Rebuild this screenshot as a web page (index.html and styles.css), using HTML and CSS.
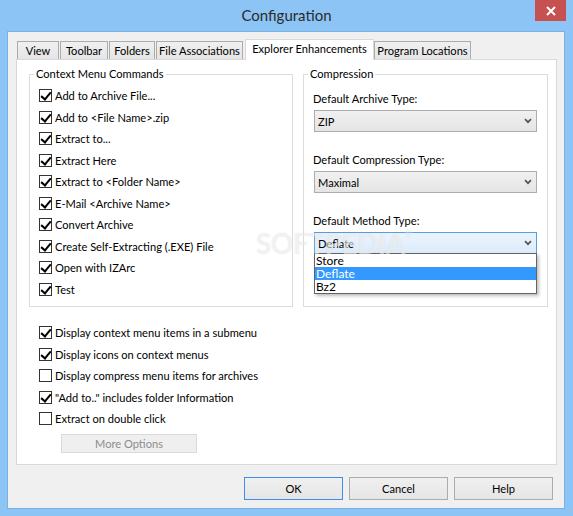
FILE: index.html
```html
<!DOCTYPE html>
<html>
<head>
<meta charset="utf-8">
<link rel="stylesheet" href="styles.css">
</head>
<body>
<div class="window">
  <div class="titlebar">
    <span class="title">Configuration</span>
    <div class="close"><svg width="10" height="10" viewBox="0 0 10 10"><path d="M1 1 L9 9 M9 1 L1 9" stroke="#fff" stroke-width="2"/></svg></div>
  </div>
  <div class="client">
    <div class="tabs">
      <span class="tab t-view">View</span>
      <span class="tab t-toolbar">Toolbar</span>
      <span class="tab t-folders">Folders</span>
      <span class="tab t-assoc">File Associations</span>
      <span class="tab tab-sel t-explorer">Explorer Enhancements</span>
      <span class="tab t-prog">Program Locations</span>
    </div>
    <div class="pane">
      <div class="groups">
        <div class="group g-cmds">
          <span class="glabel">Context Menu Commands</span>
          <div class="checklist">
            <div class="row"><span class="cb on"></span>Add to Archive File...</div>
            <div class="row"><span class="cb on"></span>Add to &lt;File Name&gt;.zip</div>
            <div class="row"><span class="cb on"></span>Extract to...</div>
            <div class="row"><span class="cb on"></span>Extract Here</div>
            <div class="row"><span class="cb on"></span>Extract to &lt;Folder Name&gt;</div>
            <div class="row"><span class="cb on"></span>E-Mail &lt;Archive Name&gt;</div>
            <div class="row"><span class="cb on"></span>Convert Archive</div>
            <div class="row"><span class="cb on"></span>Create Self-Extracting (.EXE) File</div>
            <div class="row"><span class="cb on"></span>Open with IZArc</div>
            <div class="row"><span class="cb on"></span>Test</div>
          </div>
        </div>
        <div class="group g-comp">
          <span class="glabel">Compression</span>
          <div class="field">
            <div class="flabel">Default Archive Type:</div>
            <div class="select"><span>ZIP</span><svg class="chev" width="8" height="6" viewBox="0 0 8 6"><path d="M1 1.2 L4 4.2 L7 1.2" fill="none" stroke="#555" stroke-width="1.7"/></svg></div>
          </div>
          <div class="field">
            <div class="flabel">Default Compression Type:</div>
            <div class="select"><span>Maximal</span><svg class="chev" width="8" height="6" viewBox="0 0 8 6"><path d="M1 1.2 L4 4.2 L7 1.2" fill="none" stroke="#555" stroke-width="1.7"/></svg></div>
          </div>
          <div class="field">
            <div class="flabel">Default Method Type:</div>
            <div class="select-wrap">
              <div class="select active"><span>Deflate</span><svg class="chev" width="8" height="6" viewBox="0 0 8 6"><path d="M1 1.2 L4 4.2 L7 1.2" fill="none" stroke="#555" stroke-width="1.7"/></svg></div>
              <div class="droplist">
                <div class="opt">Store</div>
                <div class="opt opt-sel">Deflate</div>
                <div class="opt">Bz2</div>
              </div>
            </div>
          </div>
        </div>
      </div>
      <div class="options">
        <div class="row"><span class="cb on"></span>Display context menu items in a submenu</div>
        <div class="row"><span class="cb on"></span>Display icons on context menus</div>
        <div class="row"><span class="cb"></span>Display compress menu items for archives</div>
        <div class="row"><span class="cb on"></span>"Add to.." includes folder Information</div>
        <div class="row"><span class="cb"></span>Extract on double click</div>
        <div class="more">More Options</div>
      </div>
    </div>
    <div class="buttons">
      <div class="btn btn-default">OK</div>
      <div class="btn">Cancel</div>
      <div class="btn">Help</div>
    </div>
  </div>
  <div class="watermark">SOFTPEDIA<sup>®</sup></div>
</div>
</body>
</html>
```
FILE: styles.css
```css
* { box-sizing: border-box; }
html, body { margin: 0; padding: 0; }
body {
  width: 573px;
  height: 516px;
  overflow: hidden;
  font-family: Lato, "Noto Sans", sans-serif;
  font-size: 11.1px;
  color: #000;
}
.window {
  width: 573px;
  height: 516px;
  background: #8cc5f5;
  display: flex;
  flex-direction: column;
  position: relative;
}
.titlebar {
  height: 31px;
  display: grid;
  grid-template-columns: 1fr auto 1fr;
}
.title {
  grid-column: 2;
  font-size: 15px;
  line-height: 31px;
  color: #2b2b2b;
}
.close {
  grid-column: 3;
  justify-self: end;
  align-self: start;
  width: 31px;
  height: 21px;
  margin-right: 7px;
  background: #c75050;
  display: flex;
  align-items: center;
  justify-content: center;
}
.client {
  flex: 1;
  margin: 0 8px 7px 7px;
  background: #f0f0f0;
  border: 1px solid #7ab1e3;
  padding: 7px 7px 0 8px;
  display: flex;
  flex-direction: column;
}
.tabs {
  display: flex;
  align-items: flex-end;
  height: 20px;
  padding-left: 1px;
  position: relative;
  z-index: 1;
}
.tab {
  height: 18px;
  border: 1px solid #acacac;
  border-bottom: none;
  background: linear-gradient(#f0f0f0, #e5e5e5);
  display: flex;
  align-items: center;
  justify-content: center;
  white-space: nowrap;
  line-height: 16px;
  padding-top: 1px;
  margin-right: 1px;
}
.tab-sel {
  height: 21px;
  margin-bottom: -1px;
  margin-left: 1px;
  margin-right: 0;
  background: #fff;
  border-color: #d9d9d9;
  padding-top: 0;
  padding-bottom: 3px;
}
.t-view { width: 42px; }
.t-toolbar { width: 48px; }
.t-folders { width: 46px; }
.t-assoc { width: 87px; }
.t-explorer { width: 129px; }
.t-prog { width: 97px; }

.pane {
  height: 406px;
  background: #fff;
  border: 1px solid #d9d9d9;
  padding: 14px 8px 0 12px;
}
.groups {
  display: flex;
  gap: 10px;
}
.group {
  position: relative;
  border: 1px solid #dcdcdc;
  height: 233px;
}
.g-cmds { width: 264px; padding: 10px 0 0 9px; }
.g-comp { width: 245px; padding: 16px 10px 0 10px; }
.glabel {
  position: absolute;
  top: -9px;
  left: 4px;
  background: #fff;
  padding: 0 2px;
  line-height: 16px;
}
.row {
  height: 21.5px;
  display: flex;
  align-items: center;
  white-space: nowrap;
}
.cb {
  width: 13px;
  height: 13px;
  border: 1px solid #333;
  background: #fff;
  margin-right: 3px;
  flex: none;
  position: relative;
}
.cb.on::after {
  content: "";
  position: absolute;
  left: 3px;
  top: 0px;
  width: 4px;
  height: 8px;
  border-right: 2px solid #000;
  border-bottom: 2px solid #000;
  transform: rotate(40deg);
}
.field { margin-bottom: 20px; }
.flabel {
  line-height: 16px;
  margin-bottom: 3px;
  margin-left: -1px;
}
.select {
  height: 22px;
  border: 1px solid #acacac;
  background: linear-gradient(#f0f0f0, #e5e5e5);
  display: flex;
  align-items: center;
  justify-content: space-between;
  padding: 0 4px 0 3px;
}
.select.active {
  border-color: #569de5;
  background: linear-gradient(#ebf4fc, #dcecfc);
}
.chev { flex: none; }
.select-wrap { position: relative; }
.droplist {
  position: absolute;
  top: 21px;
  left: 0;
  width: 223px;
  background: #fff;
  border: 1px solid #646464;
  box-shadow: 2px 2px 3px rgba(0, 0, 0, 0.25);
  z-index: 2;
}
.opt {
  height: 13px;
  line-height: 13px;
  padding-left: 1px;
  font-size: 12px;
}
.opt-sel {
  background: #3399ff;
  color: #fff;
}
.options {
  padding: 15px 0 0 10px;
}
.more {
  width: 136px;
  height: 19px;
  margin: 4px 0 0 22px;
  border: 1px solid #d9d9d9;
  background: #efefef;
  color: #8d8d8d;
  display: flex;
  align-items: center;
  justify-content: center;
}
.buttons {
  display: flex;
  justify-content: flex-end;
  gap: 6px;
  margin-top: 12px;
  padding-right: 4px;
}
.btn {
  width: 99px;
  height: 23px;
  border: 1px solid #acacac;
  background: linear-gradient(#f0f0f0, #e5e5e5);
  display: flex;
  align-items: center;
  justify-content: center;
}
.btn-default { border-color: #3c8ee6; }
.watermark {
  position: absolute;
  left: 256px;
  top: 226px;
  font-size: 28px;
  font-weight: bold;
  letter-spacing: -0.5px;
  color: rgba(255, 255, 255, 0.55);
  text-shadow: 0 0 1px rgba(110, 110, 110, 0.2);
  pointer-events: none;
  z-index: 3;
}
.watermark sup { font-size: 9px; vertical-align: top; position: relative; top: 2px; }
```
